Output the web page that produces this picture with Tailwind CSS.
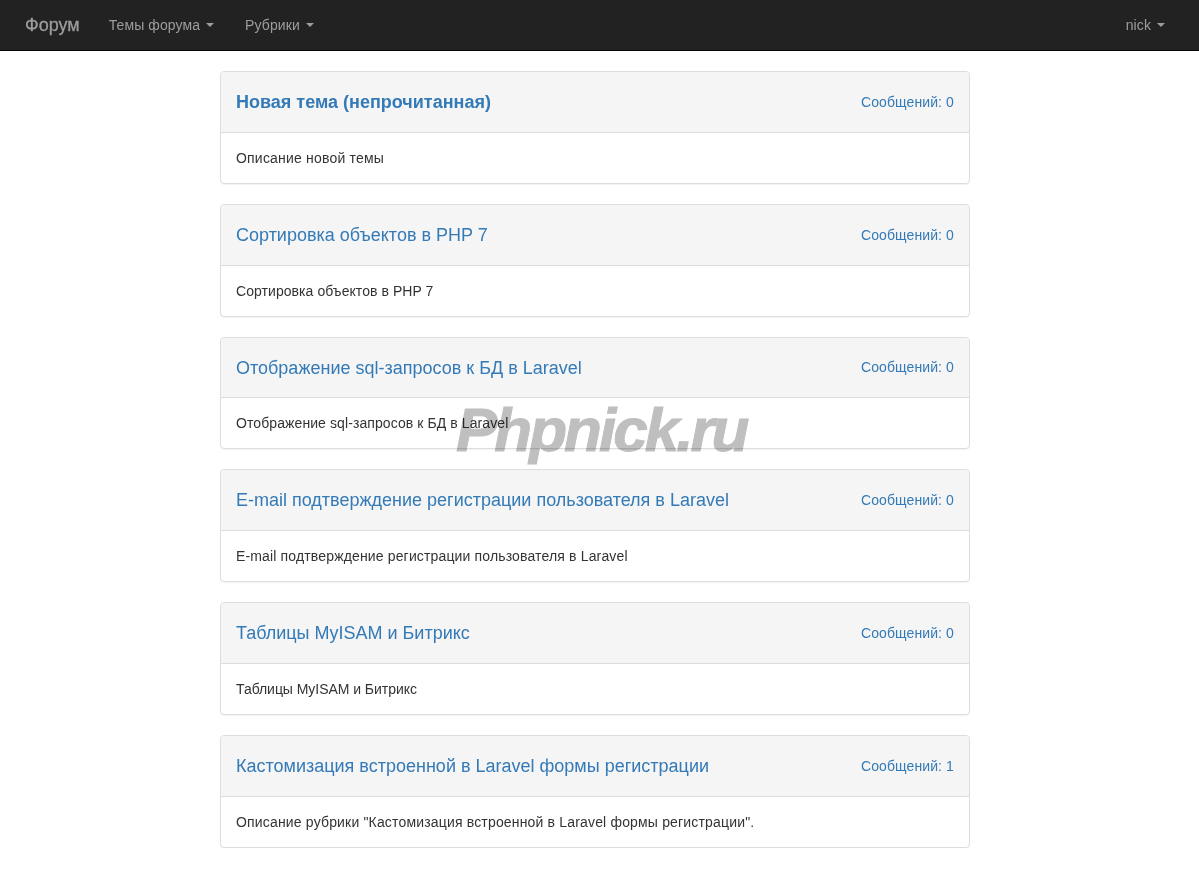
<!DOCTYPE html>
<html lang="ru">
<head>
  <meta charset="UTF-8">
  <title>Форум</title>
  <meta name="viewport" content="width=device-width, initial-scale=1.0" />
  <script src="https://cdn.jsdelivr.net/npm/@tailwindcss/browser@4"></script>
</head>
<body class="bg-white text-[#333] text-[14px] leading-[20px] font-['Liberation_Sans',Arial,sans-serif]">
  <!-- navbar -->
  <nav class="h-[51px] bg-[#222] border-b border-[#080808] flex items-center justify-between pl-[25px] pr-[34px] text-[#9d9d9d] tracking-[0.1px]">
    <div class="flex items-center">
      <a href="#" class="text-[18px] tracking-normal [-webkit-text-stroke:0.3px_#9d9d9d] mr-[29px]">Форум</a>
      <a href="#" class="flex items-center mr-[31px]">Темы форума<span class="ml-[6px] w-0 h-0 border-x-4 border-x-transparent border-t-4 border-t-[#9d9d9d]"></span></a>
      <a href="#" class="flex items-center">Рубрики<span class="ml-[6px] w-0 h-0 border-x-4 border-x-transparent border-t-4 border-t-[#9d9d9d]"></span></a>
    </div>
    <a href="#" class="flex items-center">nick<span class="ml-[6px] w-0 h-0 border-x-4 border-x-transparent border-t-4 border-t-[#9d9d9d]"></span></a>
  </nav>

  <!-- topics -->
  <main class="w-[750px] ml-[220px] mt-[20px] flex flex-col gap-[20px]">
    <section class="border border-[#ddd] rounded shadow-[0_1px_1px_rgba(0,0,0,0.05)]">
      <div class="h-[60.8px] bg-[#f5f5f5] border-b border-[#ddd] rounded-t px-[15px] flex items-center justify-between text-[#337ab7]">
        <a href="#" class="mt-[2px] text-[18px] leading-[1.1] font-bold">Новая тема (непрочитанная)</a>
        <a href="#" class="tracking-[0.1px]">Сообщений: 0</a>
      </div>
      <div class="p-[15px] tracking-[0.2px]">Описание новой темы</div>
    </section>
    <section class="border border-[#ddd] rounded shadow-[0_1px_1px_rgba(0,0,0,0.05)]">
      <div class="h-[60.8px] bg-[#f5f5f5] border-b border-[#ddd] rounded-t px-[15px] flex items-center justify-between text-[#337ab7]">
        <a href="#" class="mt-[2px] text-[18px] leading-[1.1]">Сортировка объектов в PHP 7</a>
        <a href="#" class="tracking-[0.1px]">Сообщений: 0</a>
      </div>
      <div class="p-[15px] tracking-[0.06px]">Сортировка объектов в PHP 7</div>
    </section>
    <section class="border border-[#ddd] rounded shadow-[0_1px_1px_rgba(0,0,0,0.05)]">
      <div class="h-[60.8px] bg-[#f5f5f5] border-b border-[#ddd] rounded-t px-[15px] flex items-center justify-between text-[#337ab7]">
        <a href="#" class="mt-[2px] text-[18px] leading-[1.1]">Отображение sql-запросов к БД в Laravel</a>
        <a href="#" class="tracking-[0.1px]">Сообщений: 0</a>
      </div>
      <div class="p-[15px] tracking-[0.09px]">Отображение sql-запросов к БД в Laravel</div>
    </section>
    <section class="border border-[#ddd] rounded shadow-[0_1px_1px_rgba(0,0,0,0.05)]">
      <div class="h-[60.8px] bg-[#f5f5f5] border-b border-[#ddd] rounded-t px-[15px] flex items-center justify-between text-[#337ab7]">
        <a href="#" class="mt-[2px] text-[18px] leading-[1.1]">E-mail подтверждение регистрации пользователя в Laravel</a>
        <a href="#" class="tracking-[0.1px]">Сообщений: 0</a>
      </div>
      <div class="p-[15px] tracking-[0.15px]">E-mail подтверждение регистрации пользователя в Laravel</div>
    </section>
    <section class="border border-[#ddd] rounded shadow-[0_1px_1px_rgba(0,0,0,0.05)]">
      <div class="h-[60.8px] bg-[#f5f5f5] border-b border-[#ddd] rounded-t px-[15px] flex items-center justify-between text-[#337ab7]">
        <a href="#" class="mt-[2px] text-[18px] leading-[1.1]">Таблицы MyISAM и Битрикс</a>
        <a href="#" class="tracking-[0.1px]">Сообщений: 0</a>
      </div>
      <div class="p-[15px] tracking-[-0.04px]">Таблицы MyISAM и Битрикс</div>
    </section>
    <section class="border border-[#ddd] rounded shadow-[0_1px_1px_rgba(0,0,0,0.05)]">
      <div class="h-[60.8px] bg-[#f5f5f5] border-b border-[#ddd] rounded-t px-[15px] flex items-center justify-between text-[#337ab7]">
        <a href="#" class="mt-[2px] text-[18px] leading-[1.1]">Кастомизация встроенной в Laravel формы регистрации</a>
        <a href="#" class="tracking-[0.1px]">Сообщений: 1</a>
      </div>
      <div class="p-[15px] tracking-[0.17px]">Описание рубрики "Кастомизация встроенной в Laravel формы регистрации".</div>
    </section>
  </main>

  <!-- watermark -->
  <div class="absolute left-[456px] top-[394px] text-[62px] leading-[72px] font-bold italic tracking-[-3px] whitespace-nowrap text-[#bfbfbf] [-webkit-text-stroke:1px_#bfbfbf] mix-blend-multiply pointer-events-none">Phpnick.ru</div>
</body>
</html>
